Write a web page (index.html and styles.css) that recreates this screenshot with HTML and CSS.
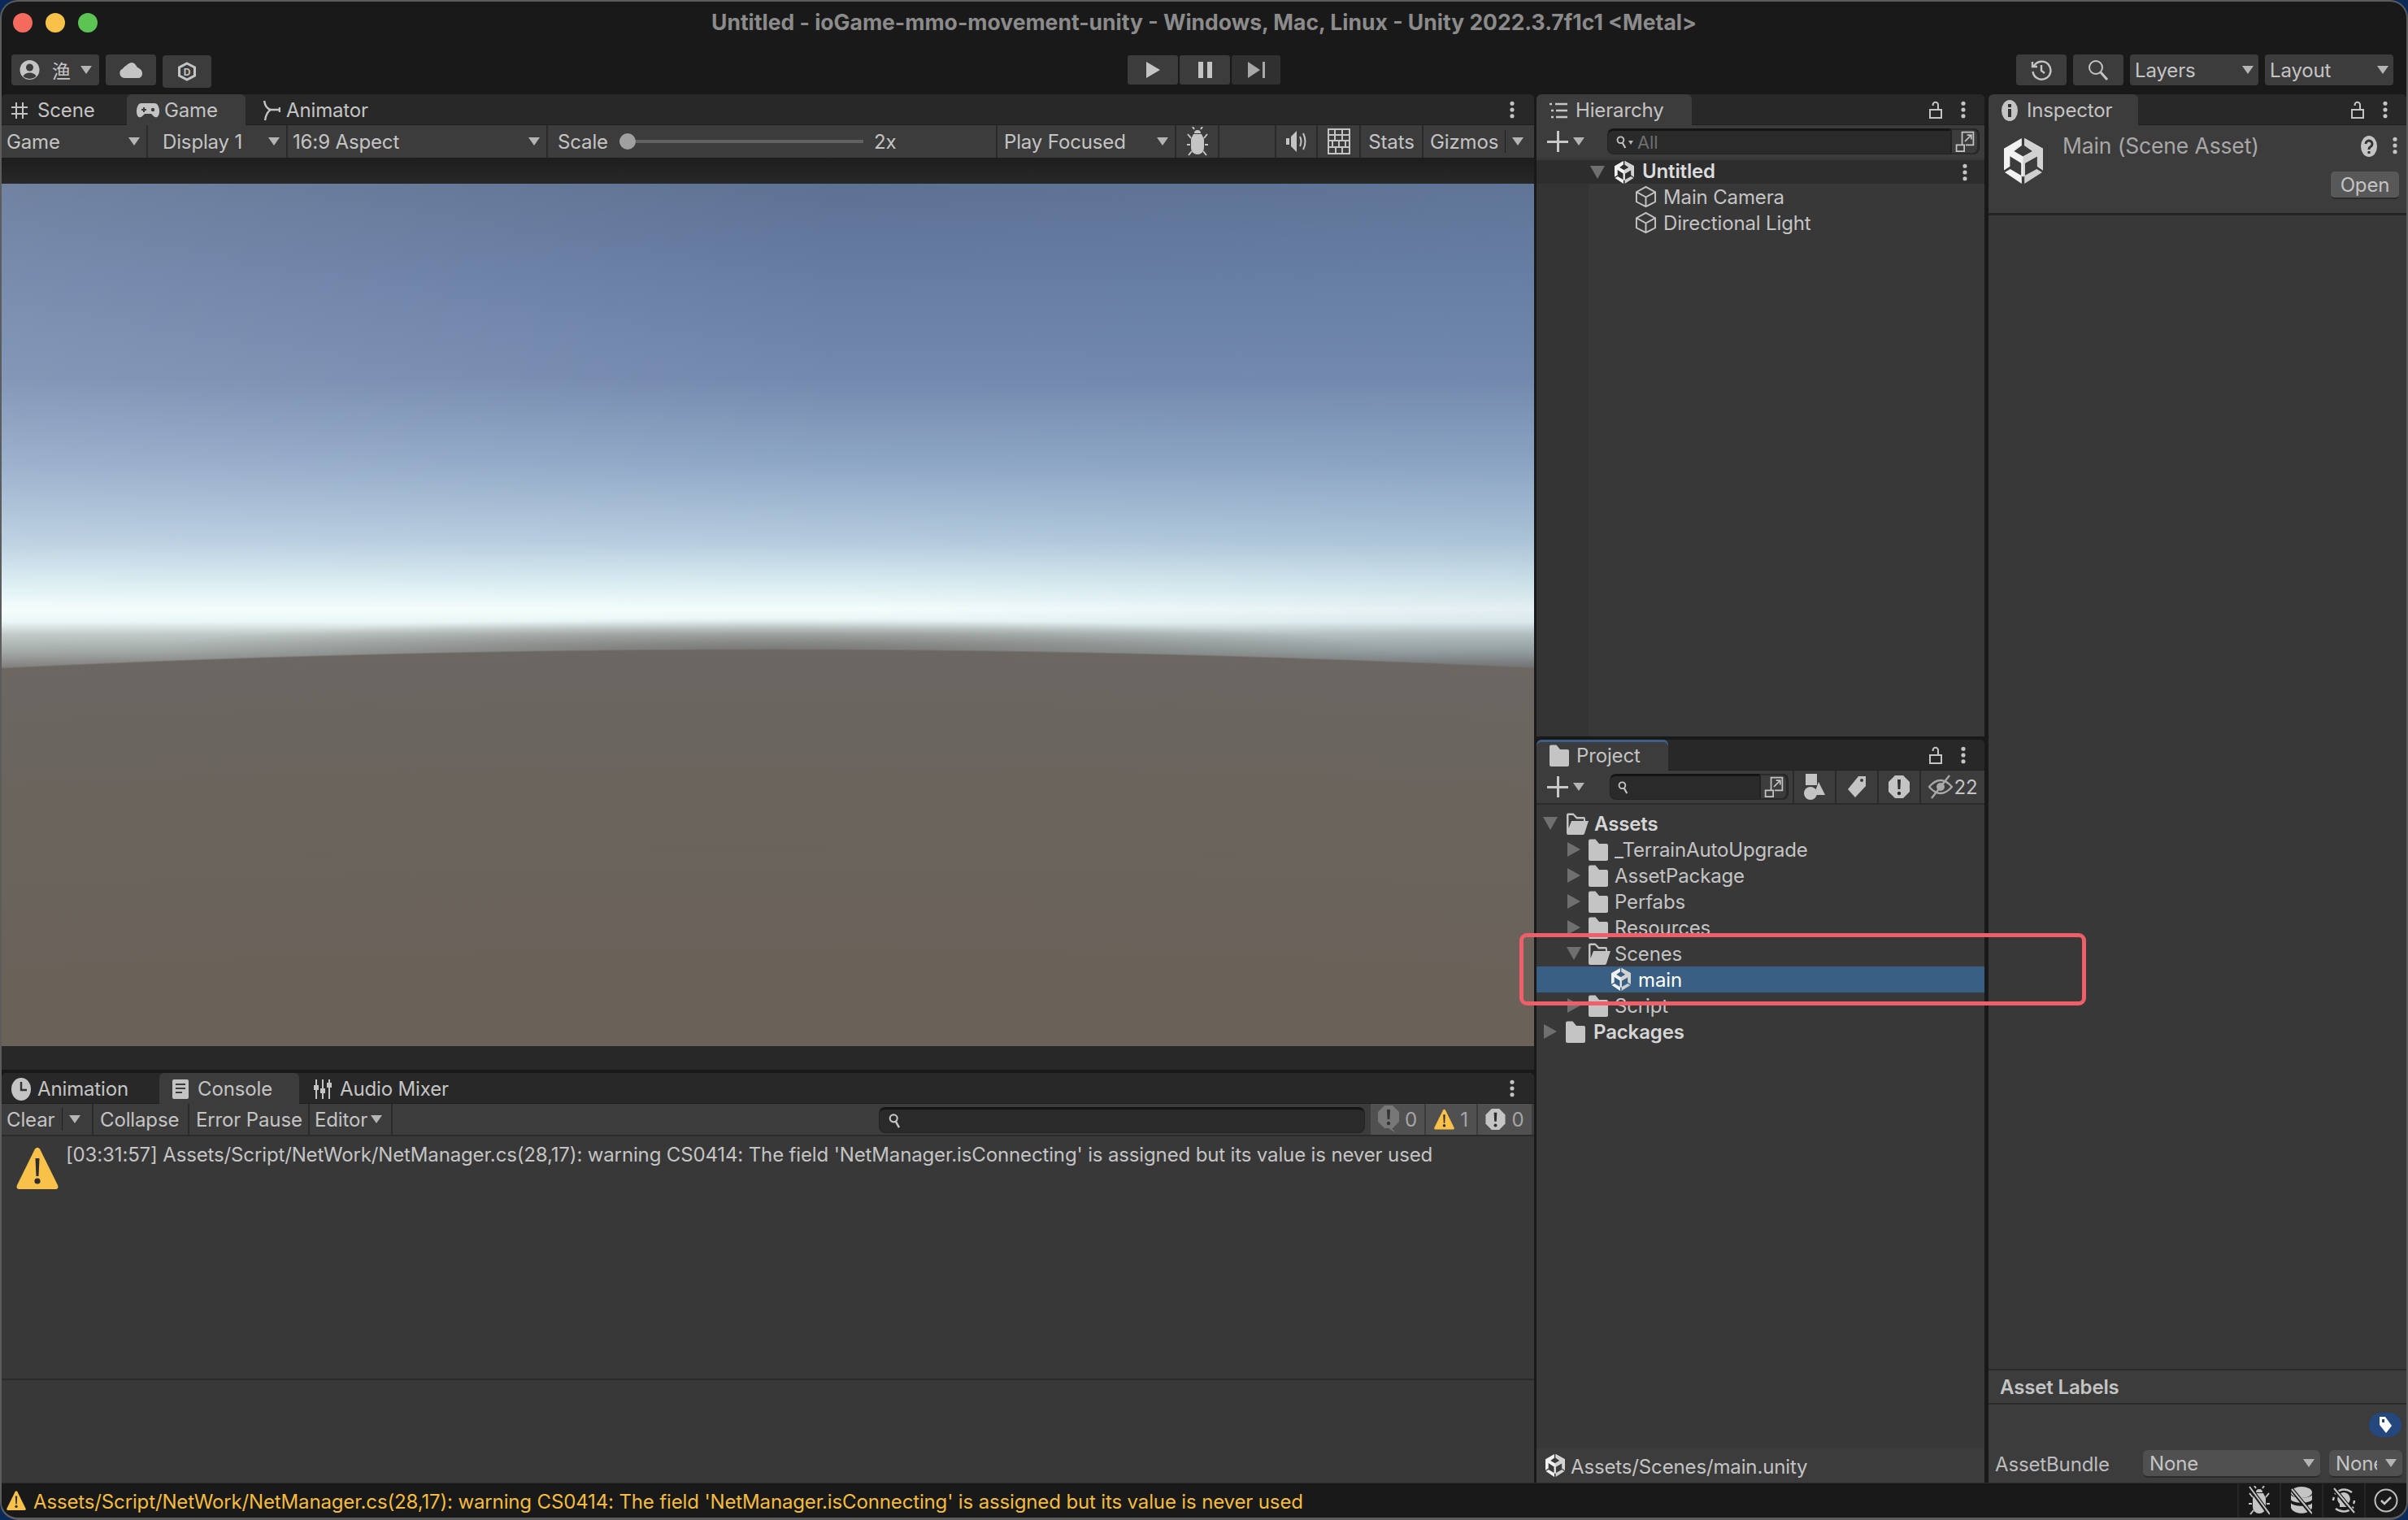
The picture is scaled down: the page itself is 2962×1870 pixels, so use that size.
FILE: index.html
```html
<!DOCTYPE html>
<html lang="en">
<head>
<meta charset="utf-8">
<title>Untitled - ioGame-mmo-movement-unity - Unity 2022.3.7f1c1</title>
<link rel="stylesheet" href="styles.css">
</head>
<body>
<svg class="defs" aria-hidden="true">
  <symbol id="unity" viewBox="45 30 143 167">
    <path fill="#f2f2f2" d="M45 68 110 30V57L82 78l33 19 35-19-30-21V30l68 38v80l-21-14V96l-45 26v46l-7 4-7-4v-46L67 96v38l-22 14Z"/>
    <path fill="#d2d2d2" d="M188 68v80l-21-14V96l-45 26v46l-7 4V97l35-19-30-21V30Z"/>
    <path fill="#f2f2f2" d="m48 155 20-12 42 25v29Z"/>
    <path fill="#cfcfcf" d="m185 155-20-12-45 25v29Z"/>
  </symbol>
  <symbol id="dots" viewBox="0 0 8 24"><circle cx="4" cy="3.5" r="2.8"/><circle cx="4" cy="12" r="2.8"/><circle cx="4" cy="20.5" r="2.8"/></symbol>
  <symbol id="lock" viewBox="0 0 16 22"><path fill="none" stroke="currentColor" stroke-width="2" d="M1 11h14v10H1ZM11 11V5a3.2 3.2 0 0 0-6.4 0v1"/></symbol>
  <symbol id="folder" viewBox="0 0 24 27"><path d="M0 2.5A2 2 0 0 1 2 .5h6.5L13 6h9a2 2 0 0 1 2 2v17a2 2 0 0 1-2 2H2a2 2 0 0 1-2-2Z"/></symbol>
  <symbol id="folder-open" viewBox="0 0 27 27"><path d="M0 2.5A2 2 0 0 1 2 .5h6.5L13 5h8a2 2 0 0 1 2 2v3h-2V7.500H12L8 3H2.500v16L6 10h21l-5 15.500a2 2 0 0 1-2 1.500H2a2 2 0 0 1-2-2Z"/></symbol>
  <symbol id="cube" viewBox="0 0 28 28"><path fill="none" stroke="currentColor" stroke-width="2" d="M14 1.500 26 8v12.500L14 26.500 2 20.500V8ZM2 8l12 6.500L26 8M14 14.500v12"/></symbol>
  <symbol id="search" viewBox="0 0 18 22"><circle cx="7" cy="7.500" r="5" fill="none" stroke="currentColor" stroke-width="2.400"/><path stroke="currentColor" stroke-width="2.800" d="m10 12 4.500 8"/></symbol>
  <symbol id="scene-search" viewBox="0 0 26 30"><path fill="none" stroke="currentColor" stroke-width="2" d="M9 19V2h16v18H14M13 15 22 6M16 6h6v6M1 20h11v9H1Z"/></symbol>
  <symbol id="warn" viewBox="0 0 52 52"><path fill="#f7c14a" d="M23 2.500Q26 -1 29 2.500L51 47q1.500 5-2.500 5h-45Q-.5 52 1 47Z"/><path fill="#2d2d2d" d="M23.500 14h5l-1 22h-3Z"/><circle cx="26" cy="42" r="3.600" fill="#2d2d2d"/></symbol>
  <symbol id="octa" viewBox="0 0 26 28"><path d="M8 0h10l8 8v12l-8 8H8l-8-8V8Z"/><path fill="#2d2d2d" d="M11 5h4l-.6 12h-2.800Z"/><circle cx="13" cy="22" r="2.200" fill="#2d2d2d"/></symbol>
  <symbol id="bug" viewBox="0 0 26 36"><path d="M9 8a4 4 0 0 1 8 0Z"/><path d="M8 9h10l3 6v11a8 8 0 0 1-16 0V15Z"/><path fill="none" stroke="currentColor" stroke-width="2" d="M9 3 7 0M17 3l2-3M5 14 1 9M21 14l4-5M4 22H0M22 22h4M6 30l-4 5M20 30l4 5"/></symbol>
</svg>
<div class="window">
  <header class="titlebar">
    <div class="lights"><span class="light red"></span><span class="light yellow"></span><span class="light green"></span></div>
    <div class="title">Untitled - ioGame-mmo-movement-unity - Windows, Mac, Linux - Unity 2022.3.7f1c1 &lt;Metal&gt;</div>
    <div></div>
  </header>
  <div class="toolbar">
    <div class="tool-left">
      <div class="tbtn tbtn-user">
        <svg class="ic-user" viewBox="0 0 24 24"><circle cx="12" cy="12" r="12" fill="#c4c4c4"/><circle cx="12" cy="9" r="4.500" fill="#3c3c3c"/><path fill="#3c3c3c" d="M4 20c2-6 14-6 16 0a12 12 0 0 1-16 0Z"/></svg>
        <span class="cjk">渔</span><i class="dd"></i>
      </div>
      <div class="tbtn tbtn-cloud"><svg class="ic-cloud" viewBox="0 0 29 20"><path fill="#c4c4c4" d="M6 20a6 6 0 0 1-2-11.500C6 6 6 6 9 4c3-3 8-5 11 0 1 2 2 3 4 4 6 3 5 12-1 12Z"/></svg></div>
      <div class="tbtn tbtn-d"><svg class="ic-d" viewBox="0 0 22 24"><path fill="none" stroke="#c4c4c4" stroke-width="3" d="M11 2 20.500 7v10L11 22 1.500 17V7Z"/><text x="11" y="16.500" class="d-letter">D</text></svg></div>
    </div>
    <div class="tool-center">
      <div class="pbtn"><svg class="ic-play" viewBox="0 0 17 20"><path fill="#c4c4c4" d="M0 0 17 10 0 20Z"/></svg></div>
      <div class="pbtn"><svg class="ic-play" viewBox="0 0 17 20"><path fill="#c4c4c4" d="M0 0h6v20H0ZM11 0h6v20h-6Z"/></svg></div>
      <div class="pbtn pbtn-dim"><svg class="ic-play" viewBox="0 0 21 20"><path fill="#a8a8a8" d="M0 0 15 10 0 20ZM18 0h3v20h-3Z"/></svg></div>
    </div>
    <div class="tool-right">
      <div class="rbtn"><svg class="ic-hist" viewBox="0 0 26 26"><path fill="none" stroke="#c4c4c4" stroke-width="2.400" d="M4 8a11 11 0 1 1-1.500 7M2 3v6h6M13 7v7l4 3"/></svg></div>
      <div class="rbtn"><svg class="ic-mag" viewBox="0 0 26 26"><circle cx="10" cy="10" r="8" fill="none" stroke="#c4c4c4" stroke-width="2"/><path stroke="#c4c4c4" stroke-width="3" d="m16 16 8 9"/></svg></div>
      <div class="ddbtn"><span>Layers</span><i class="dd"></i></div>
      <div class="ddbtn"><span>Layout</span><i class="dd"></i></div>
    </div>
  </div>

  <main class="workspace">
    <div class="col-left">
      <section class="panel panel-game">
        <div class="tabs">
          <div class="tab tab-scene"><svg class="ic-hash" viewBox="0 0 20 20"><path fill="none" stroke="#c4c4c4" stroke-width="2" d="M6 0v20M14 0v20M0 6h20M0 14h20"/></svg>Scene</div>
          <div class="tab tab-game active"><svg class="ic-pad" viewBox="0 0 28 18"><path fill="#c4c4c4" d="M6 0h16c4 0 6 5 6 10 0 7-4 9-7 6l-3-3H10l-3 3C4 19 0 17 0 10 0 5 2 0 6 0Z"/><path fill="#3c3c3c" d="M6 7h2V5h2v2h2v2h-2v2H8V9H6Z"/><circle cx="20" cy="8" r="2.200" fill="#3c3c3c"/></svg>Game</div>
          <div class="tab tab-anim"><svg class="ic-animator" viewBox="0 0 23 26"><path fill="none" stroke="#c4c4c4" stroke-width="2.400" d="M3 1c1 6 4 10 8 11h11M22 9v6M11 12c-4 2-6 7-7 13"/></svg>Animator</div>
          <svg class="ic-dots menu-dots"><use href="#dots"/></svg>
        </div>
        <div class="game-bar">
          <div class="cell c-game"><span>Game</span><i class="dd push"></i></div>
          <div class="cell cell-pad"><span>Display 1</span><i class="dd push"></i></div>
          <div class="cell cell-tight"><span>16:9 Aspect</span><i class="dd push"></i></div>
          <div class="cell scale"><span>Scale</span><div class="slider"></div><span>2x</span></div>
          <div class="cell"><span>Play Focused</span><i class="dd push"></i></div>
          <div class="cell center"><svg class="ic-bug"><use href="#bug"/></svg></div>
          <div class="cell"></div>
          <div class="cell center"><svg class="ic-audio" viewBox="0 0 26 30"><path fill="#c4c4c4" d="M0 11h4v8H0ZM6 9l7-7v26l-7-7Z"/><path fill="none" stroke="#c4c4c4" stroke-width="2" d="M17 9q3 6 0 12M21 5q5 10 0 20"/></svg></div>
          <div class="cell center"><svg class="ic-kbd" viewBox="0 0 28 32"><path fill="none" stroke="#c4c4c4" stroke-width="2" d="M1 1h26v30H1ZM1 8h26M1 15h26M1 23h26M9 1v14M18 1v14M6 15v8M14 15v8M22 15v8M10 23v8M18 23v8"/></svg></div>
          <div class="cell center"><span>Stats</span></div>
          <div class="cell gizmos"><span>Gizmos</span><b class="sep"></b><i class="dd"></i></div>
        </div>
        <div class="view-gutter"></div>
        <div class="game-view"></div>
        <div class="view-foot"></div>
      </section>
      <section class="panel panel-console">
        <div class="tabs">
          <div class="tab tab-animation"><svg class="ic-clock" viewBox="0 0 24 28"><ellipse cx="12" cy="14" rx="12" ry="14" fill="#c4c4c4"/><path fill="none" stroke="#333" stroke-width="2.400" d="M12 5v10h7"/></svg>Animation</div>
          <div class="tab tab-console active"><svg class="ic-clog" viewBox="0 0 20 24"><path fill="#c4c4c4" fill-rule="evenodd" d="M2 0h16a2 2 0 0 1 2 2v20a2 2 0 0 1-2 2H2a2 2 0 0 1-2-2V2a2 2 0 0 1 2-2Zm2 5v2h12V5Zm0 5v2h12v-2Zm0 5v2h8v-2Z"/></svg>Console</div>
          <div class="tab tab-mixer"><svg class="ic-mixer" viewBox="0 0 22 24"><path fill="none" stroke="#c4c4c4" stroke-width="2" d="M3 0v24M11 0v24M19 0v24"/><path fill="#c4c4c4" d="M0 7h6v6H0ZM8 11h6v6H8ZM16 4h6v6h-6Z"/></svg>Audio Mixer</div>
          <svg class="ic-dots menu-dots"><use href="#dots"/></svg>
        </div>
        <div class="console-bar">
          <div class="cell c-clear"><span>Clear</span><b class="sep"></b><i class="dd"></i></div>
          <div class="cell c-collapse"><span>Collapse</span></div>
          <div class="cell c-pause"><span>Error Pause</span></div>
          <div class="cell c-editor"><span>Editor</span><i class="dd"></i></div>
          <div class="searchbox console-search"><svg class="ic-search"><use href="#search"/></svg></div>
          <div class="count c-log"><svg class="ic-count dimmed" viewBox="0 0 26 34"><path fill="#777" d="M8 0h10l8 8v12l-8 8-1 0 5 6-9-6H8l-8-8V8Z"/><path fill="#333" d="M11 5h4l-.6 12h-2.800Z"/><circle cx="13" cy="22" r="2.200" fill="#333"/></svg><span class="dim">0</span></div>
          <div class="count c-warn"><svg class="ic-count"><use href="#warn"/></svg><span class="dim">1</span></div>
          <div class="count c-err"><svg class="ic-count light-ic"><use href="#octa"/></svg><span class="dim">0</span></div>
        </div>
        <div class="log-list">
          <div class="log-row"><svg class="ic-warn-big"><use href="#warn"/></svg><p class="log-text">[03:31:57] Assets/Script/NetWork/NetManager.cs(28,17): warning CS0414: The field 'NetManager.isConnecting' is assigned but its value is never used</p></div>
        </div>
        <div class="log-detail"></div>
      </section>
    </div>

    <div class="col-mid">
      <section class="panel panel-hier">
        <div class="tabs">
          <div class="tab tab-hier active"><svg class="ic-list" viewBox="0 0 22 20"><path fill="none" stroke="#c4c4c4" stroke-width="2.400" d="M7 2h15M8 10h14M8 18h14M0 2h3M2 10h3M2 18h3"/></svg>Hierarchy</div>
          <svg class="ic-lock"><use href="#lock"/></svg>
          <svg class="ic-dots"><use href="#dots"/></svg>
        </div>
        <div class="mini-bar">
          <div class="plus"><span class="plus-sign"></span><i class="dd"></i></div>
          <div class="searchbox hier-search"><svg class="ic-search-sm"><use href="#search"/></svg><i class="dd dd-xs"></i><span class="placeholder">All</span><div class="sb-end"><svg class="ic-ss"><use href="#scene-search"/></svg></div></div>
        </div>
        <div class="hier-body">
          <div class="scene-row"><i class="tri-d"></i><svg class="ic-unity-sm"><use href="#unity"/></svg><strong>Untitled</strong><svg class="ic-dots row-dots"><use href="#dots"/></svg></div>
          <div class="hier-rows">
            <div class="strip"></div>
            <div class="hier-list">
              <div class="hrow"><svg class="ic-cube"><use href="#cube"/></svg>Main Camera</div>
              <div class="hrow"><svg class="ic-cube"><use href="#cube"/></svg>Directional Light</div>
            </div>
          </div>
        </div>
      </section>
      <section class="panel panel-project">
        <div class="tabs tabs-focus">
          <div class="tab tab-proj active"><svg class="ic-folder-tab"><use href="#folder"/></svg>Project</div>
          <svg class="ic-lock"><use href="#lock"/></svg>
          <svg class="ic-dots"><use href="#dots"/></svg>
        </div>
        <div class="mini-bar mini-project">
          <div class="plus"><span class="plus-sign"></span><i class="dd"></i></div>
          <div class="searchbox proj-search"><svg class="ic-search-sm"><use href="#search"/></svg><div class="sb-end"><svg class="ic-ss"><use href="#scene-search"/></svg></div></div>
          <div class="pcell"><svg class="ic-shapes" viewBox="0 0 26 32"><path fill="#c4c4c4" d="M2 0h14v14H2Z"/><circle cx="8" cy="24" r="8" fill="#c4c4c4"/><path fill="#c4c4c4" d="M18 10l8 16H12Z"/></svg></div>
          <div class="pcell"><svg class="ic-tag" viewBox="0 0 22 26"><path fill="#c4c4c4" fill-rule="evenodd" d="M13 0h9v12L9 26 0 16Zm4 3a2 2 0 1 0 .1 0Z"/></svg></div>
          <div class="pcell"><svg class="ic-oct"><use href="#octa"/></svg></div>
          <div class="pcell pcell-eye"><svg class="ic-eye" viewBox="0 0 30 32"><path fill="none" stroke="#a8a8a8" stroke-width="2.400" d="M1 16Q15 0 29 16 15 32 1 16ZM4 30 26 2"/><circle cx="15" cy="16" r="5" fill="#a8a8a8"/></svg><span>22</span></div>
        </div>
        <div class="tree">
          <div class="trow depth0"><i class="tri-d"></i><svg class="ic-fo"><use href="#folder-open"/></svg><strong>Assets</strong></div>
          <div class="trow depth1"><i class="tri-r"></i><svg class="ic-f"><use href="#folder"/></svg>_TerrainAutoUpgrade</div>
          <div class="trow depth1"><i class="tri-r"></i><svg class="ic-f"><use href="#folder"/></svg>AssetPackage</div>
          <div class="trow depth1"><i class="tri-r"></i><svg class="ic-f"><use href="#folder"/></svg>Perfabs</div>
          <div class="trow depth1"><i class="tri-r"></i><svg class="ic-f"><use href="#folder"/></svg>Resources</div>
          <div class="trow depth1"><i class="tri-d"></i><svg class="ic-fo"><use href="#folder-open"/></svg>Scenes</div>
          <div class="trow depth2 selected"><svg class="ic-unity-sm"><use href="#unity"/></svg>main</div>
          <div class="trow depth1"><i class="tri-r"></i><svg class="ic-f"><use href="#folder"/></svg>Script</div>
          <div class="trow depth0"><i class="tri-r"></i><svg class="ic-f"><use href="#folder"/></svg><strong>Packages</strong></div>
        </div>
        <div class="path-bar"><svg class="ic-unity-sm"><use href="#unity"/></svg><span class="path-text">Assets/Scenes/main.unity</span></div>
      </section>
    </div>

    <section class="panel panel-insp">
      <div class="tabs">
        <div class="tab tab-insp active"><svg class="ic-info" viewBox="0 0 20 26"><ellipse cx="10" cy="13" rx="10" ry="13" fill="#c4c4c4"/><path fill="#333" d="M8 11h4v10H8ZM8 5h4v4H8Z"/></svg>Inspector</div>
        <svg class="ic-lock"><use href="#lock"/></svg>
        <svg class="ic-dots"><use href="#dots"/></svg>
      </div>
      <div class="insp-head">
        <svg class="ic-unity-lg"><use href="#unity"/></svg>
        <div class="insp-title">Main (Scene Asset)</div>
        <svg class="ic-help" viewBox="0 0 20 26"><ellipse cx="10" cy="13" rx="10" ry="13" fill="#c4c4c4"/><path fill="none" stroke="#333" stroke-width="3" d="M6 10a4 4 0 1 1 6 3.500c-2 1-2 2-2 3.500"/><path fill="#333" d="M8.500 19h3v3h-3Z"/></svg>
        <svg class="ic-dots head-dots"><use href="#dots"/></svg>
        <div class="open-btn">Open</div>
      </div>
      <div class="insp-body"></div>
      <div class="labels-head">Asset Labels</div>
      <div class="labels-body">
        <div class="tag-row"><div class="tag-pill"><svg class="ic-tag-w" viewBox="0 0 16 20"><path fill="#fff" fill-rule="evenodd" d="M1 0h7l8 11-7 9-8-10Zm3 3v4h3V3Z"/></svg></div></div>
        <div class="bundle-row"><span class="bundle-label">AssetBundle</span><div class="field field-a"><span>None</span><i class="dd"></i></div><div class="field field-b"><span class="clip">None</span><i class="dd"></i></div></div>
      </div>
    </section>
  </main>

  <footer class="statusbar">
    <svg class="ic-warn-sm"><use href="#warn"/></svg>
    <span class="status-text">Assets/Script/NetWork/NetManager.cs(28,17): warning CS0414: The field 'NetManager.isConnecting' is assigned but its value is never used</span>
    <div class="status-icons">
      <div class="sicon"><svg class="ic-sbug" viewBox="0 0 26 36"><use href="#bug" width="26" height="36"/><path stroke="#191919" stroke-width="5" d="M0 0 26 36"/><path stroke="#c4c4c4" stroke-width="2" d="M1 1 26 35"/></svg></div>
      <div class="sicon"><svg class="ic-sdb" viewBox="0 0 26 34"><ellipse cx="13" cy="7" rx="13" ry="7" fill="#c4c4c4"/><path fill="#c4c4c4" d="M0 10c3 5 23 5 26 0v6c-3 5-23 5-26 0ZM0 20c3 5 23 5 26 0v6c-3 9-23 9-26 0Z"/><path stroke="#191919" stroke-width="5" d="M0 2 26 34"/><path stroke="#c4c4c4" stroke-width="2" d="M1 3 26 33"/></svg></div>
      <div class="sicon"><svg class="ic-sbulb" viewBox="0 0 30 36"><path fill="none" stroke="#c4c4c4" stroke-width="2.400" d="M4 10Q14 0 25 8M27 26Q16 36 5 28M2 18q0-2 1-4M28 18q0 2-1 4"/><path fill="#c4c4c4" d="M15 8a8 8 0 0 1 5 14v4H10v-4A8 8 0 0 1 15 8Z"/><path stroke="#191919" stroke-width="5" d="M2 2 28 34"/><path stroke="#c4c4c4" stroke-width="2" d="M3 3 28 33"/></svg></div>
      <div class="sicon"><svg class="ic-scheck" viewBox="0 0 30 30"><circle cx="15" cy="15" r="13.500" fill="none" stroke="#bdbdbd" stroke-width="2"/><path fill="none" stroke="#c4c4c4" stroke-width="2.600" d="m9 15 4 4 8-8"/></svg></div>
    </div>
  </footer>
  <div class="highlight"></div>
</div>
</body>
</html>
```

FILE: styles.css
```css
* { box-sizing: border-box; }
html, body { margin: 0; padding: 0; background: #0b2a5a; }
body { width: 2962px; height: 1870px; overflow: hidden; font-family: Inter, "Noto Sans CJK SC", sans-serif; font-size: 24px; letter-spacing: -.14px; color: #c4c4c4; }
.defs { position: absolute; width: 0; height: 0; }
svg { display: block; flex: none; fill: currentColor; }
i { display: block; flex: none; }

.window { position: relative; width: 2962px; height: 1870px; display: flex; flex-direction: column; background: #191919; border: solid #5c5c5c; border-width: 2px 2px 3px 2px; border-radius: 22px; overflow: hidden; }

/* title */
.titlebar { height: 50px; flex: none; display: grid; grid-template-columns: 1fr auto 1fr; align-items: center; }
.lights { display: flex; gap: 16px; padding-left: 14px; padding-top: 2px; }
.light { width: 24px; height: 24px; border-radius: 50%; }
.red { background: #f46b5e; }
.yellow { background: #f7c14a; }
.green { background: #5cc453; }
.title { font-size: 26.500px; font-weight: 700; letter-spacing: 0; color: #8b8b8b; white-space: nowrap; }

/* toolbar */
.toolbar { height: 64px; flex: none; display: grid; grid-template-columns: 1fr auto 1fr; padding: 15px 16px 0 12px; align-items: start; }
.tool-left, .tool-center, .tool-right { display: flex; }
.tool-left { gap: 8px; }
.tool-center { gap: 2px; margin-top: 1px; padding-left: 4px; }
.tool-right { justify-content: flex-end; gap: 8px; }
.tbtn, .pbtn, .rbtn, .ddbtn { height: 38px; background: #3c3c3c; border-radius: 4px; display: flex; align-items: center; justify-content: center; }
.tbtn-user { width: 108px; justify-content: flex-start; padding-left: 10px; }
.tbtn-cloud { width: 62px; }
.tbtn-d { width: 60px; height: 40px; margin-top: 1px; }
.cjk { margin-left: 15px; font-size: 23px; font-family: "Noto Sans CJK SC", sans-serif; }
.tbtn-user .dd { margin-left: 12px; }
.ic-user { width: 25px; height: 24px; }
.ic-cloud { width: 29px; height: 20px; }
.ic-d { width: 24px; height: 24px; }
.d-letter { font: 700 12px Inter, sans-serif; text-anchor: middle; fill: #c4c4c4; }
.pbtn { width: 62px; height: 36px; border-radius: 3px; }
.pbtn-dim { background: #303030; width: 60px; }
.ic-play { width: 17px; height: 20px; }
.pbtn-dim .ic-play { width: 21px; }
.rbtn { width: 62px; }
.ic-hist, .ic-mag { width: 26px; height: 26px; }
.ddbtn { width: 158px; justify-content: space-between; padding: 0 6px 0 6px; }

.dd { width: 0; height: 0; border-left: 7.500px solid transparent; border-right: 7.500px solid transparent; border-top: 10px solid #b4b4b4; }
.dd-xs { border-left-width: 3.500px; border-right-width: 3.500px; border-top-width: 5px; margin-left: 1px; }

/* workspace */
.workspace { flex: 1; min-height: 0; display: flex; }
.col-left { width: 1885px; flex: none; display: flex; flex-direction: column; gap: 4px; }
.col-mid { width: 551px; flex: none; margin-left: 3px; display: flex; flex-direction: column; gap: 4px; }
.panel { display: flex; flex-direction: column; background: #383838; min-height: 0; border-radius: 6px 6px 0 0; overflow: hidden; }
.panel-game { height: 1200px; flex: none; background: #282828; }
.panel-console { flex: 1; }
.panel-hier { height: 790px; flex: none; }
.panel-project { flex: 1; }
.panel-insp { flex: 1; margin-left: 5px; background: #3c3c3c; }

.tabs { height: 38px; flex: none; display: flex; align-items: center; background: #282828; border-bottom: 1px solid #1f1f1f; }
.tab { height: 38px; display: flex; align-items: center; gap: 9px; padding-left: 12px; padding-top: 2px; white-space: nowrap; font-size: 24px; border-radius: 6px 6px 0 0; }
.tab.active { background: #3c3c3c; }
.tab-scene { width: 154px; gap: 12px; }
.tab-game { width: 146px; gap: 6px; }
.tab-anim { gap: 7px; padding-left: 20px; }
.tab-animation { width: 194px; gap: 8px; }
.tab-console { width: 172px; padding-left: 16px; gap: 11px; }
.tab-mixer { padding-left: 18px; gap: 10px; }
.tab-hier { width: 191px; padding-left: 16px; gap: 10px; }
.tab-proj { width: 162px; padding-left: 16px; gap: 9px; }
.tab-insp { width: 184px; padding-left: 16px; gap: 11px; }
.tabs-focus { position: relative; }
.tabs-focus .tab { box-shadow: inset 0 3px 0 #3a5f8a; }
.tabs .ic-lock { margin-left: auto; margin-right: 22px; }
.ic-lock { width: 16px; height: 22px; }
.ic-dots { width: 8px; height: 22px; }
.menu-dots { margin-left: auto; margin-right: 23px; }
.panel-hier .tabs > .ic-dots, .panel-project .tabs > .ic-dots { margin-right: 22px; }
.panel-insp .tabs > .ic-dots { margin-right: 22px; }
.ic-hash { width: 20px; height: 20px; }
.ic-pad { width: 28px; height: 18px; }
.ic-animator { width: 23px; height: 26px; }
.ic-clock { width: 24px; height: 28px; }
.ic-clog { width: 20px; height: 24px; }
.ic-mixer { width: 22px; height: 24px; }
.ic-list { width: 22px; height: 20px; }
.ic-folder-tab { width: 24px; height: 27px; }
.ic-info { width: 20px; height: 26px; }

/* game bar */
.game-bar { height: 40px; flex: none; display: grid; grid-template-columns: 178px 170px 318px 551px 218px 51px 68px 49px 51px 75px 1fr; column-gap: 2px; background: #2a2a2a; }
.cell { height: 40px; background: #3c3c3c; display: flex; align-items: center; padding: 0 8px; white-space: nowrap; font-size: 24px; }
.c-game { padding-left: 6px; }
.cell-pad { padding-left: 18px; }
.cell-tight { padding-left: 6px; }
.push { margin-left: auto; }
.center { justify-content: center; padding: 0; }
.scale { padding: 0 12px; }
.slider { width: 300px; margin: 0 13px 0 14px; height: 4px; background: #616161; position: relative; }
.slider::before { content: ""; position: absolute; left: 0; top: -8px; width: 20px; height: 20px; border-radius: 50%; background: #a0a0a0; }
.gizmos { padding: 0 10px 0 8px; }
.sep { display: block; width: 1px; height: 28px; background: #1f1f1f; margin: 0 8px; flex: none; }
.ic-bug { width: 26px; height: 36px; }
.ic-audio { width: 26px; height: 30px; }
.ic-kbd { width: 28px; height: 32px; }

.view-gutter { height: 32px; flex: none; background: linear-gradient(#1d1d1d, #282828); }
.game-view { height: 1061px; flex: none; background:
  radial-gradient(circle 19413px at 944px 19987px, #6a6158 0, #6a6259 19013px, #6b655f 19313px, #6c6763 19412px, #6c6763 19413px, transparent 19415px),
  radial-gradient(ellipse 760px 42px at 944px 576px, rgba(107,102,99,.75), rgba(107,102,99,0)),
  linear-gradient(90deg, rgba(255,255,255,.12), rgba(255,255,255,0) 55%, rgba(110,140,170,.12)),
  linear-gradient(#5d7193 0, #667ca3 110px, #7389ae 240px, #8fa7c6 345px, #b4cbde 440px, #dbeef2 495px, #f4fdfc 524px, #e8f5f5 539px, #b8c2c0 555px, #98a09e 575px, #6e6a67 597px); }
.view-foot { flex: 1; background: #282828; }

/* console */
.console-bar { height: 40px; flex: none; display: flex; background: #3c3c3c; border-bottom: 2px solid #2a2a2a; }
.console-bar .cell { height: 38px; border-right: 2px solid #2a2a2a; }
.c-clear { width: 113px; padding-left: 6px; }
.c-clear .sep { margin: 0 8px 0 9px; }
.c-collapse { width: 118px; }
.c-pause { width: 148px; }
.c-editor { width: 102px; padding-left: 6px; gap: 4px; }
.searchbox { position: relative; height: 32px; background: #2a2a2a; border-radius: 8px; border: 1px solid #232323; border-top: 3px solid #141414; display: flex; align-items: center; flex: none; }
.console-search { width: 598px; margin: 4px 7px 0 auto; padding-left: 10px; }
.ic-search { width: 18px; height: 22px; color: #c4c4c4; transform: scale(.9); }
.count { height: 38px; background: #505050; display: flex; align-items: center; justify-content: center; gap: 7px; margin-right: 2px; }
.c-log { width: 66px; }
.c-warn { width: 62px; }
.c-err { width: 66px; margin-right: 3px; }
.ic-count { width: 25px; height: 26px; }
.dimmed { width: 26px; height: 34px; }
.light-ic { color: #c4c4c4; }
.dim { color: #a6a6a6; }
.log-list { height: 300px; flex: none; border-bottom: 2px solid #2a2a2a; }
.log-row { display: flex; padding: 13px 0 0 18px; gap: 9px; }
.ic-warn-big { width: 52px; height: 52px; }
.log-text { margin: -5px 0 0; line-height: 30px; white-space: nowrap; }
.log-detail { flex: 1; }

/* hierarchy */
.mini-bar { height: 40px; flex: none; display: flex; align-items: flex-start; background: #3c3c3c; padding-top: 4px; }
.plus { width: 87px; height: 32px; flex: none; display: flex; align-items: center; padding-left: 13px; gap: 6px; }
.plus-sign { position: relative; width: 26px; height: 26px; flex: none; background: linear-gradient(#c8c8c8, #c8c8c8) center / 26px 3px no-repeat, linear-gradient(#c8c8c8, #c8c8c8) center / 3px 26px no-repeat; }
.hier-search { width: 458px; padding-left: 10px; }
.ic-search-sm { width: 14px; height: 18px; }
.placeholder { color: #6f6f6f; margin-left: 5px; font-size: 22px; }
.sb-end { position: absolute; right: 0; top: -3px; bottom: -1px; width: 35px; background: #3c3c3c; border: 2px solid #2a2a2a; border-left: 2px solid #222; border-radius: 0 8px 8px 0; display: flex; align-items: center; justify-content: center; }
.ic-ss { width: 24px; height: 26px; }
.hier-body { flex: 1; display: flex; flex-direction: column; min-height: 0; }
.scene-row { height: 29px; margin-top: 3px; flex: none; background: #2d2d2d; display: flex; align-items: center; padding-left: 66px; font-size: 24px; }
.scene-row .tri-d { margin-right: 12px; }
.scene-row strong { margin-left: 10px; margin-bottom: 2px; color: #dcdcdc; font-weight: 600; }
.row-dots { margin-left: auto; margin-right: 20px; }
.hier-rows { flex: 1; display: flex; }
.strip { width: 64px; flex: none; background: #333; }
.hier-list { flex: 1; }
.hrow { height: 32px; display: flex; align-items: center; gap: 8px; padding-left: 57px; }
.ic-cube { width: 27px; height: 28px; }
.ic-unity-sm { width: 24px; height: 28px; }

.tri-d { width: 0; height: 0; border-left: 9px solid transparent; border-right: 9px solid transparent; border-top: 16px solid #6f6f6f; }
.tri-r { width: 0; height: 0; border-top: 9px solid transparent; border-bottom: 9px solid transparent; border-left: 16px solid #6f6f6f; }

/* project */
.mini-project { border-bottom: 2px solid #2a2a2a; padding-top: 0; align-items: stretch; height: 42px; }
.mini-project .plus { height: 40px; width: 90px; }
.proj-search { width: 220px; padding-left: 9px; margin: 4px 5px 0 0; }
.pcell { width: 52px; height: 40px; flex: none; display: flex; align-items: center; justify-content: center; border-left: 2px solid #2a2a2a; }
.pcell-eye { flex: 1; gap: 2px; color: #c4c4c4; }
.ic-shapes { width: 26px; height: 32px; }
.ic-tag { width: 22px; height: 26px; }
.ic-oct { width: 26px; height: 28px; }
.ic-eye { width: 30px; height: 32px; }
.tree { flex: 1; padding-top: 7px; }
.trow { height: 32px; display: flex; align-items: center; white-space: nowrap; }
.trow strong { color: #d6d6d6; font-weight: 600; }
.depth0 { padding-left: 8px; }
.depth0 .tri-d, .depth0 .tri-r { margin-right: 11px; }
.depth0 .ic-f { margin-right: 10px; }
.depth0 .ic-fo { margin-right: 7px; }
.depth0 .tri-r { margin-left: 1px; margin-right: 11px; }
.depth1 { padding-left: 38px; }
.depth1 .tri-r { margin-right: 10px; }
.depth1 .tri-d { margin-left: -1px; margin-right: 9px; }
.depth1 .ic-f, .depth1 .ic-fo { margin-right: 8px; }
.ic-f { width: 24px; height: 27px; }
.ic-fo { width: 27px; height: 27px; }
.depth1 .ic-fo { margin-right: 5px; }
.depth2 { padding-left: 92px; gap: 9px; }
.selected { background: #3a5f85; color: #fff; }
.path-bar { height: 42px; flex: none; background: #3c3c3c; display: flex; align-items: center; gap: 7px; padding-left: 11px; }
.path-text { padding-top: 3px; }

/* inspector */
.insp-head { height: 111px; flex: none; position: relative; display: flex; align-items: flex-start; padding: 16px 0 0 19px; border-bottom: 3px solid #232323; }
.ic-unity-lg { width: 48px; height: 56px; }
.insp-title { margin-left: 24px; margin-top: -6px; line-height: 30px; color: #a8a8a8; font-size: 26.500px; white-space: nowrap; }
.ic-help { width: 20px; height: 26px; margin-left: auto; margin-top: -3px; }
.head-dots { margin: -2px 10px 0 18px; }
.open-btn { position: absolute; right: 9px; top: 57px; width: 84px; height: 34px; background: #585858; border-bottom: 2px solid #2a2a2a; border-radius: 5px; display: flex; align-items: center; justify-content: center; }
.insp-body { flex: 1; background: #383838; }
.labels-head { height: 44px; flex: none; display: flex; align-items: center; padding-left: 14px; font-weight: 600; border-top: 2px solid #2a2a2a; border-bottom: 2px solid #2a2a2a; }
.labels-body { height: 96px; flex: none; }
.tag-row { height: 56px; display: flex; justify-content: flex-end; padding: 10px 6px 0 0; }
.tag-pill { width: 40px; height: 30px; border-radius: 15px; background: #24477d; display: flex; align-items: center; justify-content: center; }
.ic-tag-w { width: 16px; height: 20px; }
.bundle-row { display: flex; align-items: center; }
.bundle-label { width: 190px; padding-left: 8px; flex: none; color: #bdbdbd; }
.field { height: 34px; background: #505050; border-radius: 6px; border-bottom: 2px solid #2a2a2a; display: flex; align-items: center; justify-content: space-between; padding: 0 7px 0 8px; }
.field-a { width: 218px; }
.field-b { width: 90px; margin-left: 11px; }
.clip { width: 51px; overflow: hidden; }

/* status */
.statusbar { height: 43px; flex: none; display: flex; align-items: center; padding-left: 6px; background: #191919; border-top: 1px solid #2a2a2a; }
.ic-warn-sm { width: 24px; height: 26px; }
.status-text { margin-left: 9px; padding-top: 2px; color: #f4bc3e; white-space: nowrap; }
.status-icons { margin-left: auto; display: flex; height: 100%; }
.sicon { width: 52px; border-left: 2px solid #262626; display: flex; align-items: center; justify-content: center; }
.ic-sbug { width: 26px; height: 36px; }
.ic-sdb { width: 26px; height: 34px; }
.ic-sbulb { width: 30px; height: 36px; }
.ic-scheck { width: 30px; height: 30px; }

.highlight { position: absolute; left: 1867px; top: 1146px; width: 697px; height: 89px; border: 5px solid #ee5f69; border-radius: 9px; pointer-events: none; }
```
